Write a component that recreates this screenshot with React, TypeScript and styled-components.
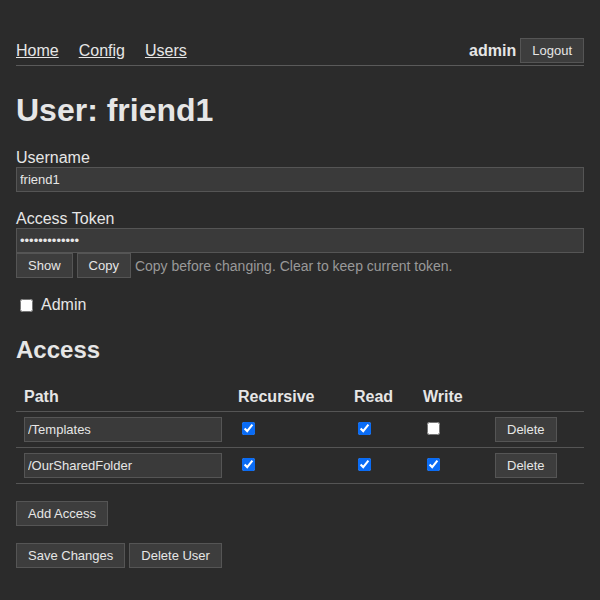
import React from "react";
import styled, { createGlobalStyle } from "styled-components";

const Global = createGlobalStyle`
  html, body { margin: 0; background: #2b2b2b; }
  body { font-family: "Liberation Sans", Arial, sans-serif; color: #e6e6e6; }
`;

const Page = styled.div`
  padding: 38px 16px 20px;
`;

const Nav = styled.nav`
  display: flex;
  align-items: center;
  justify-content: space-between;
  border-bottom: 1px solid #5a5a5a;
  padding-bottom: 2px;
`;

const Links = styled.div`
  display: flex;
  gap: 20px;
  font-size: 16px;
`;

const NavLink = styled.a`
  color: #e6e6e6;
  text-decoration: underline;
`;

const UserBox = styled.div`
  display: flex;
  align-items: center;
  gap: 4px;
  font-weight: bold;
  font-size: 16px;
`;

const Button = styled.button`
  font-family: "Liberation Sans", Arial, sans-serif;
  font-size: 13px;
  color: #e6e6e6;
  background: #3d3d3d;
  border: 1px solid #555;
  padding: 0 11px;
  height: 25px;
`;

const H1 = styled.h1`
  font-size: 32px;
  margin: 26px 0 20px;
  line-height: 37px;
`;

const Label = styled.div`
  font-size: 16px;
  line-height: 18px;
`;

const Input = styled.input<{ $w?: number }>`
  display: block;
  box-sizing: border-box;
  width: ${(p) => (p.$w ? `${p.$w}px` : "100%")};
  height: 25px;
  background: #3a3a3a;
  border: 1px solid #555;
  color: #e6e6e6;
  font-family: "Liberation Sans", Arial, sans-serif;
  font-size: 13px;
  padding: 0 3px;
`;

const Field = styled.div`
  margin-bottom: 18px;
`;

const Row = styled.div`
  display: flex;
  align-items: center;
  gap: 4px;
  font-size: 14px;
  color: #999;
`;

const CheckLabel = styled.label`
  display: flex;
  align-items: center;
  gap: 8px;
  font-size: 16px;
  margin: 5px 0 0 4px;
`;

const Check = styled.input<{ $inset?: boolean }>`
  width: 13px;
  height: 13px;
  margin: 0 0 0 ${(p) => (p.$inset ? "4px" : "0")};
  accent-color: #0a6cf5;
`;

const H2 = styled.h2`
  font-size: 24px;
  margin: 22px 0 19px;
`;

const Table = styled.table`
  width: 100%;
  border-collapse: collapse;
  th, td { padding: 5px 8px; text-align: left; }
  th { font-size: 16px; font-weight: bold; padding-bottom: 5px; }
  tr { border-bottom: 1px solid #555; }
`;

const Actions = styled.div`
  display: flex;
  gap: 4px;
  margin-top: 17px;
`;

const rows = [
  { path: "/Templates", r: true, rd: true, w: false },
  { path: "/OurSharedFolder", r: true, rd: true, w: true },
];

export default function App() {
  return (
    <Page>
      <Global />
      <Nav>
        <Links>
          <NavLink href="#">Home</NavLink>
          <NavLink href="#">Config</NavLink>
          <NavLink href="#">Users</NavLink>
        </Links>
        <UserBox>
          admin <Button>Logout</Button>
        </UserBox>
      </Nav>
      <H1>User: friend1</H1>
      <Field>
        <Label>Username</Label>
        <Input defaultValue="friend1" />
      </Field>
      <Field>
        <Label>Access Token</Label>
        <Input type="password" defaultValue="abcdefghijklm" />
        <Row>
          <Button>Show</Button>
          <Button>Copy</Button>
          Copy before changing. Clear to keep current token.
        </Row>
      </Field>
      <CheckLabel>
        <Check type="checkbox" /> Admin
      </CheckLabel>
      <H2>Access</H2>
      <Table>
        <colgroup>
          <col style={{ width: 214 }} />
          <col style={{ width: 116 }} />
          <col style={{ width: 69 }} />
          <col style={{ width: 72 }} />
          <col />
        </colgroup>
        <thead>
          <tr>
            <th>Path</th>
            <th>Recursive</th>
            <th>Read</th>
            <th>Write</th>
            <th></th>
          </tr>
        </thead>
        <tbody>
          {rows.map((r) => (
            <tr key={r.path}>
              <td><Input $w={198} defaultValue={r.path} /></td>
              <td><Check $inset type="checkbox" defaultChecked={r.r} /></td>
              <td><Check $inset type="checkbox" defaultChecked={r.rd} /></td>
              <td><Check $inset type="checkbox" defaultChecked={r.w} /></td>
              <td><Button>Delete</Button></td>
            </tr>
          ))}
        </tbody>
      </Table>
      <Actions><Button>Add Access</Button></Actions>
      <Actions><Button>Save Changes</Button><Button>Delete User</Button></Actions>
    </Page>
  );
}
